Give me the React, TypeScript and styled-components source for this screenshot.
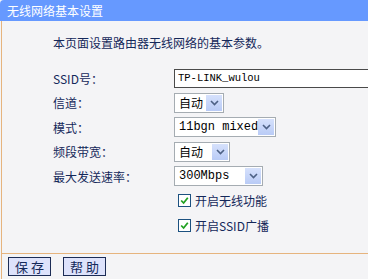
import React from "react";
import styled, { createGlobalStyle } from "styled-components";

const GlobalStyle = createGlobalStyle`
  html, body {
    margin: 0;
    padding: 0;
    background: #f4f4f6;
  }
  body {
    font-family: "Noto Sans CJK SC", "Liberation Sans", sans-serif;
    font-size: 12px;
    color: #14285a;
  }
`;

const Page = styled.div`
  width: 368px;
  height: 279px;
  overflow: hidden;
  display: flex;
  flex-direction: column;
`;

const TitleBar = styled.div`
  height: 21px;
  background: #6699ff;
  color: #fff;
  font-size: 12px;
  line-height: 21px;
  padding-left: 7px;
  border-top-left-radius: 4px;
`;

const Panel = styled.div`
  height: 232px;
  margin-left: 1px;
  border-left: 1px solid #e6b47e;
  padding-left: 51px;
  box-sizing: border-box;
`;

const Intro = styled.div`
  margin-top: 12px;
  line-height: 20px;
  font-size: 12px;
`;

const Form = styled.div`
  margin-top: 13px;
  display: grid;
  grid-template-columns: 121px auto;
  grid-auto-rows: 24.5px;
  align-items: center;
`;

const Label = styled.div`
  font-size: 12px;
  white-space: nowrap;
`;

const TextInput = styled.div`
  width: 210px;
  height: 19px;
  box-sizing: border-box;
  border: 1px solid #4a4a4a;
  border-right: none;
  background: #fff;
  font-family: "Liberation Mono", monospace;
  font-size: 10.5px;
  line-height: 17px;
  padding-left: 3px;
  color: #000;
`;

const Select = styled.div<{ w: number }>`
  width: ${(p) => p.w}px;
  height: 20px;
  box-sizing: border-box;
  border: 1px solid #a5acb2;
  background: #fff;
  display: flex;
  align-items: center;
  justify-content: space-between;
  padding: 1px;
`;

const SelectText = styled.span<{ mono?: boolean }>`
  padding-left: 3px;
  color: #000;
  white-space: nowrap;
  font-family: ${(p) =>
    p.mono ? `"Liberation Mono", monospace` : `"Noto Sans CJK SC", sans-serif`};
  font-size: 12px;
  line-height: 16px;
`;

const Arrow = styled.span`
  flex: none;
  width: 16px;
  height: 16px;
  background: linear-gradient(#d6e1fc, #b9cbf6);
  display: flex;
  align-items: center;
  justify-content: center;
`;

const CheckRow = styled.label`
  grid-column: 2;
  display: flex;
  align-items: center;
  gap: 4px;
  padding-left: 4px;
  font-size: 12px;
`;

const Box = styled.span`
  width: 11px;
  height: 11px;
  border: 1px solid #1c5180;
  background: #fff;
  display: flex;
  align-items: center;
  justify-content: center;
`;

const Footer = styled.div`
  flex: 1;
  margin-left: 1px;
  border-left: 1px solid #e6b47e;
  border-top: 1px solid #e6b47e;
  display: flex;
  gap: 12px;
  padding: 3px 0 0 6px;
`;

const Button = styled.button`
  width: 43px;
  height: 19px;
  padding: 0;
  border: 1px solid #1c2c55;
  background: #dde2fb;
  color: #14285a;
  font-family: "Noto Sans CJK SC", sans-serif;
  font-size: 13px;
  line-height: 17px;
  letter-spacing: 3px;
  text-indent: 3px;
`;

const Chevron = () => (
  <svg width="9" height="6" viewBox="0 0 9 6">
    <path d="M1 1 L4.5 4.5 L8 1" fill="none" stroke="#4d6185" strokeWidth="1.6" />
  </svg>
);

const Check = () => (
  <svg width="9" height="9" viewBox="0 0 9 9">
    <path d="M1.2 4.5 L3.6 7 L7.8 1.8" fill="none" stroke="#21a121" strokeWidth="1.8" />
  </svg>
);

const Dropdown = ({ w, text, mono }: { w: number; text: string; mono?: boolean }) => (
  <Select w={w}>
    <SelectText mono={mono}>{text}</SelectText>
    <Arrow>
      <Chevron />
    </Arrow>
  </Select>
);

export default function App() {
  return (
    <Page>
      <GlobalStyle />
      <TitleBar>无线网络基本设置</TitleBar>
      <Panel>
        <Intro>本页面设置路由器无线网络的基本参数。</Intro>
        <Form>
          <Label>SSID号：</Label>
          <TextInput>TP-LINK_wulou</TextInput>
          <Label>信道：</Label>
          <Dropdown w={50} text="自动" />
          <Label>模式：</Label>
          <Dropdown w={102} text="11bgn mixed" mono />
          <Label>频段带宽：</Label>
          <Dropdown w={56} text="自动" />
          <Label>最大发送速率：</Label>
          <Dropdown w={89} text="300Mbps" mono />
          <CheckRow>
            <Box>
              <Check />
            </Box>
            开启无线功能
          </CheckRow>
          <CheckRow>
            <Box>
              <Check />
            </Box>
            开启SSID广播
          </CheckRow>
        </Form>
      </Panel>
      <Footer>
        <Button>保存</Button>
        <Button>帮助</Button>
      </Footer>
    </Page>
  );
}
